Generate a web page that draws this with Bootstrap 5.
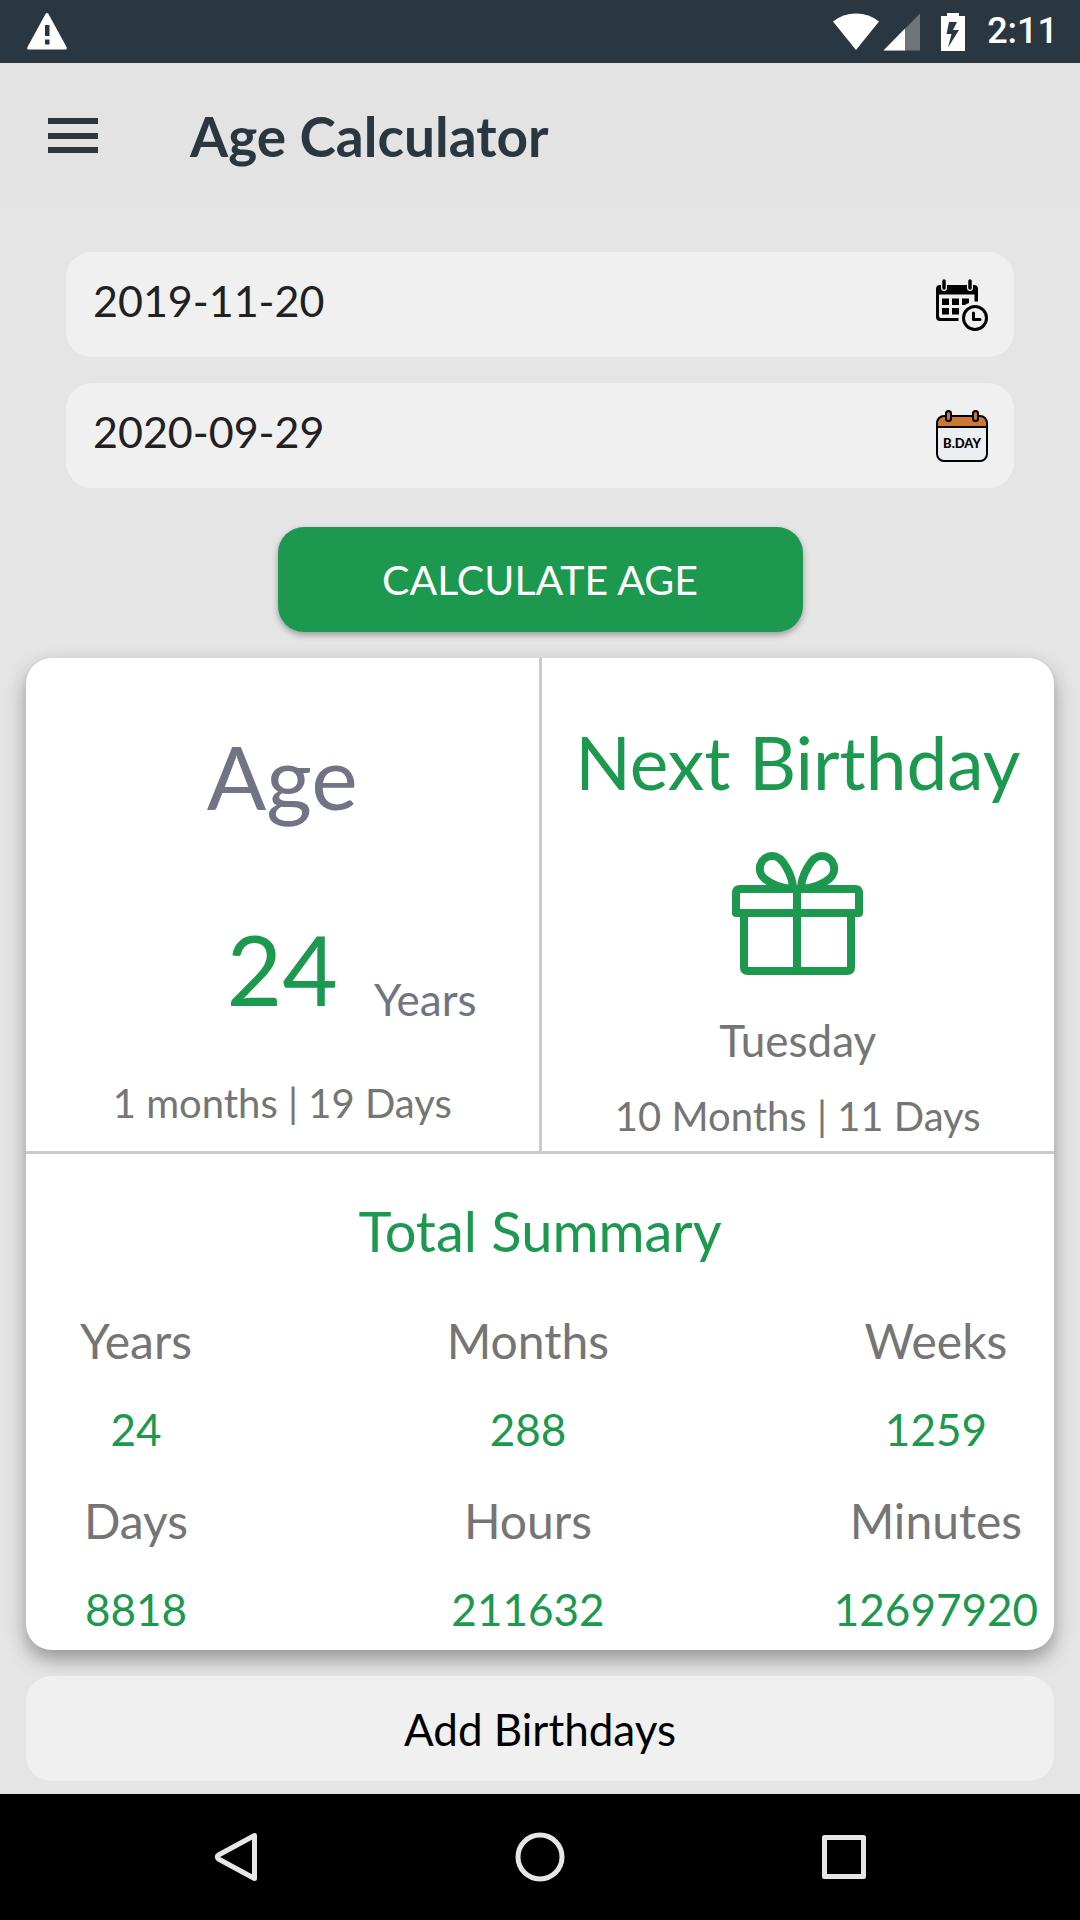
<!DOCTYPE html>
<html lang="en">
<head>
<meta charset="utf-8">
<meta name="viewport" content="width=device-width, initial-scale=1">
<title>Age Calculator</title>
<link href="https://cdn.jsdelivr.net/npm/bootstrap@5.3.0/dist/css/bootstrap.min.css" rel="stylesheet">
<style>
:root { --brand: #1c994f; --slate: #2b3740; --soft: #f0f0f0; --rule: #cbcbcb; }
body { background: #e5e5e5; color: #757575; font-family: Lato, "Open Sans", sans-serif; }
svg { display: block; flex: none; }
.status-bar { background: var(--slate); height: 63px; padding: 0 22px 0 27px; }
.status-time { font: 500 36px/63px Roboto, sans-serif; margin-left: 18px; }
.app-bar { background: #e3e3e3; color: var(--slate); height: 146px; padding-left: 48px; gap: 92px; }
.app-title { font-size: 55px; line-height: 66px; font-weight: 700; }
.date-fields { padding: 43px 66px 0; gap: 26px; }
.date-box { background: var(--soft); border-radius: 26px; height: 105px; padding-right: 26px; }
.date-box .form-control { height: 105px; font-size: 43px; line-height: 52px; color: #212121; padding: 0 27px 8px; }
.btn-calc, .btn-add { height: 105px; border: 0; border-radius: 26px; }
.btn-calc { width: 525px; max-width: 100%; margin: 39px 0 26px; background: var(--brand); color: #fff; font-size: 41px; box-shadow: 0 3px 6px rgba(0,0,0,.32); }
.btn-calc:hover { background: #178343; color: #fff; }
.btn-add { background: var(--soft); color: #000; font-size: 44px; margin: 26px 0 13px; }
.page-pad { padding: 0 26px; }
.result-card { border: 0; border-radius: 26px; color: inherit; box-shadow: 0 9px 20px rgba(0,0,0,.36); }
.half { flex: 1 1 0; min-width: 0; }
.split { border-bottom: 3px solid var(--rule); }
.age-half { padding-top: 65px; border-right: 3px solid var(--rule); }
.next-half { padding: 61px 0 11px; }
.text-brand { color: var(--brand); }
.text-slate { color: #707484; }
.age-title { font-size: 88px; line-height: 106px; }
.age-row { display: grid; grid-template-columns: 1fr auto 1fr; align-items: end; column-gap: 36px; margin: 82px 0 52px; width: 100%; }
.age-value { grid-column: 2; font-size: 96px; line-height: 116px; }
.unit { font-size: 44px; line-height: 56px; }
.next-title { font-size: 73px; line-height: 86px; }
.detail { font-size: 40px; line-height: 48px; }
.weekday { font-size: 44px; line-height: 52px; margin: 39px 0 26px; }
.gift { margin-top: 47px; }
.summary { padding: 43px 16px 15px 54px; }
.summary-title { font-size: 56px; line-height: 68px; margin: 0 0 47px; padding-right: 38px; }
.totals { display: grid; grid-template-columns: auto 1fr auto; row-gap: 37px; margin: 0; }
.totals .mid { padding-left: 30px; }
.totals dt { font-size: 48px; line-height: 58px; font-weight: 400; }
.totals dd { font-size: 44px; line-height: 52px; margin: 33px 0 0; color: var(--brand); }
.nav-bar { background: #000; height: 126px; padding: 0 84px; }
</style>
<script src="https://cdn.jsdelivr.net/npm/bootstrap@5.3.0/dist/js/bootstrap.bundle.min.js"></script>
</head>
<body>
<div class="d-flex flex-column min-vh-100">

<div class="status-bar d-flex align-items-center text-white">
  <svg class="me-auto" width="40" height="37" viewBox="0 0 40 37" aria-hidden="true"><path fill="#fff" fill-rule="evenodd" d="M18.500 1Q20 -1 21.500 1L39.500 34Q40.500 36.500 38.500 36.500H1.500Q-.5 36.500 .5 34ZM18 12V23H22.500V12ZM18 26.500V31.500H22.500V26.500Z"/></svg>
  <svg width="46" height="38" viewBox="0 0 46 38" aria-hidden="true"><path fill="#fff" d="M0 8.500Q10 .5 23 .5T46 8.500L23 37Z"/></svg>
  <svg class="ms-1" width="38" height="38" viewBox="0 0 38 38" aria-hidden="true"><path fill="#6d757b" d="M37 .5V37.500H.5Z"/><path fill="#fff" d="M22 15.500V37.500H.5Z"/></svg>
  <svg class="ms-3" width="32" height="38" viewBox="0 0 32 38" aria-hidden="true"><path fill="#fff" fill-rule="evenodd" d="M10 0H22V3H28V38H4V3H10ZM12 9L9.500 21H14.500L11 34.500L22 17H16L20 9Z"/></svg>
  <span class="status-time">2:11</span>
</div>

<header class="app-bar d-flex align-items-center">
  <button type="button" class="btn p-0 border-0" aria-label="Open menu">
    <svg width="50" height="36" viewBox="0 0 50 36"><path fill="#2b3740" d="M0 0H50V6H0ZM0 15H50V21H0ZM0 29H50V35H0Z"/></svg>
  </button>
  <h1 class="app-title m-0">Age Calculator</h1>
</header>

<main class="d-flex flex-column">
  <div class="date-fields d-flex flex-column">
    <div class="date-box d-flex align-items-center">
      <input class="form-control border-0 bg-transparent shadow-none" id="today" type="text" value="2019-11-20" aria-label="Today's date">
      <svg width="52" height="52" viewBox="0 0 52 52" aria-hidden="true">
        <path d="M4 6H38Q42 6 42 10V22.500H38.500V15.500H3V37Q3 39 5 39H22.500V42H4Q0 42 0 38V10Q0 6 4 6Z"/>
        <g stroke-linecap="round"><path stroke="#f0f0f0" stroke-width="6" d="M8 3V9M34 3V9"/><path stroke="#000" stroke-width="3.500" d="M8 2V9M34 2V9"/></g>
        <path d="M6 19.500H13V26H6ZM16 19.500H23V26H16ZM26 19.500H33V24Q30 25 29 26H26ZM6 29H13V35.500H6ZM16 29H23V35.500H16Z"/>
        <circle cx="39" cy="39" r="11.500" fill="#f0f0f0" stroke="#000" stroke-width="3"/>
        <path d="M37.500 34V40.500H44" fill="none" stroke="#000" stroke-width="3" stroke-linecap="round" stroke-linejoin="round"/>
      </svg>
    </div>
    <div class="date-box d-flex align-items-center">
      <input class="form-control border-0 bg-transparent shadow-none" id="birth" type="text" value="2020-09-29" aria-label="Date of birth">
      <svg width="52" height="52" viewBox="0 0 52 52" aria-hidden="true">
        <rect x="1" y="6" width="50" height="45" rx="7" fill="#ebeff2"/>
        <path d="M1 17V12Q1 6 8 6H44Q51 6 51 12V17Z" fill="#cc7832"/>
        <path d="M1 17H51" stroke="#000" stroke-width="2"/>
        <rect x="1" y="6" width="50" height="45" rx="7" fill="none" stroke="#000" stroke-width="2"/>
        <g fill="#cc7832" stroke="#000" stroke-width="2"><rect x="10" y="1" width="5" height="10" rx="2.500"/><rect x="37" y="1" width="5" height="10" rx="2.500"/></g>
        <text x="26" y="38" text-anchor="middle" font-family="Lato, sans-serif" font-weight="900" font-size="13">B.DAY</text>
      </svg>
    </div>
  </div>

  <div class="text-center"><button type="button" class="btn btn-calc">CALCULATE AGE</button></div>

  <div class="page-pad">
    <section class="card result-card">
      <div class="split d-flex">
        <div class="half age-half d-flex flex-column align-items-center">
          <h2 class="age-title text-slate fw-normal m-0">Age</h2>
          <div class="age-row"><span class="age-value text-brand">24</span><span class="unit text-slate">Years</span></div>
          <p class="detail m-0">1 months | 19 Days</p>
        </div>
        <div class="half next-half d-flex flex-column align-items-center">
          <h2 class="next-title text-brand fw-normal m-0 text-nowrap">Next Birthday</h2>
          <svg class="gift" width="132" height="123" viewBox="0 0 132 123" fill="none" stroke="#1c994f" stroke-width="8" aria-hidden="true">
            <path d="M65 37V119"/>
            <path d="M4 61V41Q4 37 8 37H123Q127 37 127 41V61Z" stroke-linejoin="round"/>
            <path d="M12 61V115Q12 119 16 119H115Q119 119 119 115V61"/>
            <path d="M61 37C61 25 51 4 41 4C27 4 24 20 33 27C40 33 48 36 61 37ZM69 37C69 25 79 4 89 4C103 4 106 20 97 27C90 33 82 36 69 37Z"/>
          </svg>
          <p class="weekday">Tuesday</p>
          <p class="detail m-0">10 Months | 11 Days</p>
        </div>
      </div>
      <div class="summary">
        <h2 class="summary-title text-brand fw-normal text-center">Total Summary</h2>
        <dl class="totals text-center">
          <div><dt>Years</dt><dd>24</dd></div>
          <div class="mid"><dt>Months</dt><dd>288</dd></div>
          <div><dt>Weeks</dt><dd>1259</dd></div>
          <div><dt>Days</dt><dd>8818</dd></div>
          <div class="mid"><dt>Hours</dt><dd>211632</dd></div>
          <div><dt>Minutes</dt><dd>12697920</dd></div>
        </dl>
      </div>
    </section>
    <button type="button" class="btn btn-add w-100 position-relative">Add Birthdays</button>
  </div>
</main>

<nav class="nav-bar d-flex mt-auto" aria-label="System">
  <button type="button" class="btn border-0 half d-flex align-items-center justify-content-center" aria-label="Back"><svg width="50" height="50" viewBox="0 0 50 50" fill="none" stroke="#e6e6e6" stroke-width="5" stroke-linejoin="round"><path d="M43.500 3.500V46.500L7.500 27Q5 25 7.500 23Z"/></svg></button>
  <button type="button" class="btn border-0 half d-flex align-items-center justify-content-center" aria-label="Home"><svg width="50" height="50" viewBox="0 0 50 50" fill="none" stroke="#e6e6e6" stroke-width="5"><circle cx="25" cy="25" r="22"/></svg></button>
  <button type="button" class="btn border-0 half d-flex align-items-center justify-content-center" aria-label="Recent apps"><svg width="50" height="50" viewBox="0 0 50 50" fill="none" stroke="#e6e6e6" stroke-width="5" stroke-linejoin="round"><rect x="5.500" y="5.500" width="39" height="39"/></svg></button>
</nav>

</div>
</body>
</html>
